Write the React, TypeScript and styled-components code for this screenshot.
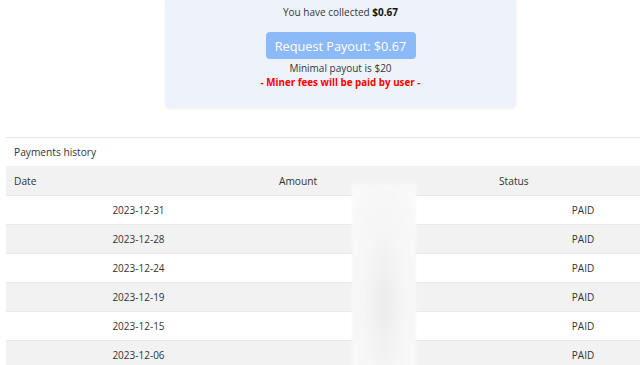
import { createGlobalStyle, styled } from 'styled-components'

const payments = [
	{ date: '2023-12-31', amount: '$0.00', status: 'PAID' },
	{ date: '2023-12-28', amount: '$0.00', status: 'PAID' },
	{ date: '2023-12-24', amount: '$0.00', status: 'PAID' },
	{ date: '2023-12-19', amount: '$0.00', status: 'PAID' },
	{ date: '2023-12-15', amount: '$0.00', status: 'PAID' },
	{ date: '2023-12-06', amount: '$0.00', status: 'PAID' },
]

export default function App() {
	return (
		<Page>
			<GlobalStyle />
			<CardRow>
				<PayoutCard>
					<Collected>
						You have collected <b>$0.67</b>
					</Collected>
					<PayoutButton>Request Payout: $0.67</PayoutButton>
					<Note>Minimal payout is $20</Note>
					<Warning>- Miner fees will be paid by user -</Warning>
				</PayoutCard>
			</CardRow>
			<History>
				<Caption>Payments history</Caption>
				<Table>
					<HeadRow>
						<HeadCell>Date</HeadCell>
						<HeadCell>Amount</HeadCell>
						<HeadCell>Status</HeadCell>
					</HeadRow>
					{payments.map((p, i) => (
						<Row key={p.date} $striped={i % 2 === 1}>
							<Cell>{p.date}</Cell>
							<Cell>
								<Hidden>{p.amount}</Hidden>
							</Cell>
							<Cell>{p.status}</Cell>
						</Row>
					))}
				</Table>
				<BlurMask />
			</History>
		</Page>
	)
}

const GlobalStyle = createGlobalStyle`
	html, body {
		margin: 0;
		background: #fff;
		overflow: hidden;
	}
	body {
		font-family: 'Open Sans', 'Liberation Sans', sans-serif;
		color: #333;
	}
`

const Page = styled.div`
	width: 640px;
	height: 365px;
	overflow: hidden;
`

const CardRow = styled.div`
	display: flex;
	padding-left: 165px;
`

const PayoutCard = styled.section`
	width: 351px;
	height: 108px;
	box-sizing: border-box;
	background: #eef3fb;
	border-radius: 0 0 5px 5px;
	box-shadow: 0 1px 3px rgba(0, 0, 0, 0.06);
	display: flex;
	flex-direction: column;
	align-items: center;
	padding-top: 4px;
`

const Collected = styled.div`
	font-size: 10px;
	line-height: 16px;
	color: #333;

	b {
		color: #111;
		font-weight: 700;
	}
`

const PayoutButton = styled.button`
	margin-top: 12px;
	width: 150px;
	height: 27px;
	border: none;
	border-radius: 4px;
	background: #8cb9f7;
	color: #fff;
	font-family: inherit;
	font-size: 12.7px;
	padding: 0;
`

const Note = styled.div`
	margin-top: 2px;
	font-size: 10px;
	line-height: 15px;
	color: #333;
`

const Warning = styled.div`
	font-size: 9.8px;
	line-height: 14px;
	font-weight: 700;
	color: #f00;
`

const History = styled.section`
	position: relative;
	margin: 29px 0 0 6px;
	width: 669px;
	border-top: 1px solid #e8e8e8;
`

const Caption = styled.div`
	height: 28px;
	display: flex;
	align-items: center;
	padding-left: 8px;
	font-size: 10.2px;
	color: #333;
`

const Table = styled.div`
	display: grid;
	grid-template-columns: 265px 220px 184px;
`

const HeadRow = styled.div`
	display: contents;

	& > * {
		background: #f2f2f2;
	}
`

const HeadCell = styled.div`
	height: 29px;
	display: flex;
	align-items: center;
	padding-left: 8px;
	font-size: 10.2px;
	color: #333;
`

const Row = styled.div<{ $striped: boolean }>`
	display: contents;

	& > * {
		background: ${p => (p.$striped ? '#f2f2f2' : '#fff')};
		border-top: 1px solid #e9e9e9;
	}
`

const Cell = styled.div`
	height: 27px;
	display: flex;
	align-items: center;
	justify-content: center;
	padding-bottom: 1px;
	font-size: 10px;
	color: #333;
`

const Hidden = styled.span`
	visibility: hidden;
`

const BlurMask = styled.div`
	position: absolute;
	left: 346px;
	top: 46px;
	width: 64px;
	height: 200px;
	background: radial-gradient(ellipse at 50% 60%, #ececec 0%, #f6f6f6 45%, #fafafa 100%);
	filter: blur(1px);
`
